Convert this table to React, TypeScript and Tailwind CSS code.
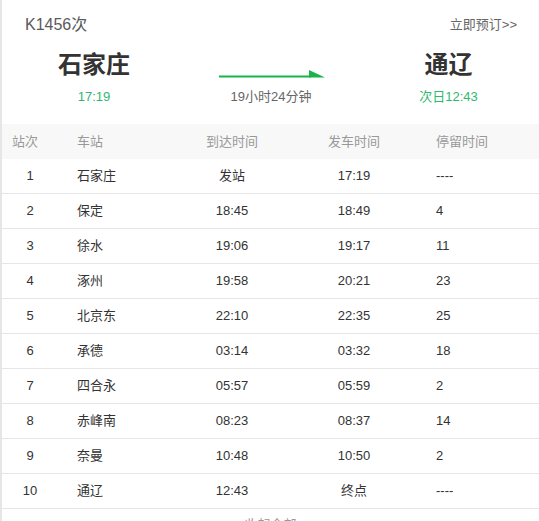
import React from "react";

const rows = [
  ["1", "石家庄", "发站", "17:19", "----"],
  ["2", "保定", "18:45", "18:49", "4"],
  ["3", "徐水", "19:06", "19:17", "11"],
  ["4", "涿州", "19:58", "20:21", "23"],
  ["5", "北京东", "22:10", "22:35", "25"],
  ["6", "承德", "03:14", "03:32", "18"],
  ["7", "四合永", "05:57", "05:59", "2"],
  ["8", "赤峰南", "08:23", "08:37", "14"],
  ["9", "奈曼", "10:48", "10:50", "2"],
  ["10", "通辽", "12:43", "终点", "----"],
];

const grid = "grid grid-cols-[56px_112px_124px_120px_1fr]";

export default function App() {
  return (
    <div
      className="w-[539px] h-[521px] overflow-hidden bg-white border-l-2 border-[#e6e6e6]"
      style={{ fontFamily: '"Liberation Sans", Arial, "Noto Sans CJK SC", sans-serif' }}
    >
      <div className="h-[124px] pt-[13px]">
        <div className="flex justify-between items-center h-6 pl-[23px] pr-[22px]">
          <span className="text-[16px] text-[#5a5a5a]">K1456次</span>
          <span className="text-[13px] text-[#666]">立即预订&gt;&gt;</span>
        </div>
        <div className="grid grid-cols-[184px_170px_1fr] mt-[12px]">
          <div className="flex flex-col items-center">
            <div className="text-[24px] leading-[32px] font-bold text-[#333]">石家庄</div>
            <div className="text-[13px] leading-[18px] mt-[7px] text-[#2fb86e]">17:19</div>
          </div>
          <div className="flex flex-col items-center pt-[21px]">
            <svg width="108" height="8" viewBox="0 0 108 8" className="block ml-[3px]">
              <rect x="0" y="5.5" width="92" height="2" fill="#19b34a" />
              <polygon points="90,0 106,7.5 90,7.5" fill="#19b34a" />
            </svg>
            <div className="text-[13px] leading-[18px] mt-[10px] text-[#666]">19小时24分钟</div>
          </div>
          <div className="flex flex-col items-center pl-[2px]">
            <div className="text-[24px] leading-[32px] font-bold text-[#333]">通辽</div>
            <div className="text-[13px] leading-[18px] mt-[7px] text-[#2fb86e]">次日12:43</div>
          </div>
        </div>
      </div>
      <div className={`${grid} h-[35px] items-center bg-[#f8f8f8] text-[13px] text-[#999]`}>
        <div className="pl-[10px]">站次</div>
        <div className="pl-[19px]">车站</div>
        <div className="text-center">到达时间</div>
        <div className="text-center">发车时间</div>
        <div className="pl-[22px]">停留时间</div>
      </div>
      {rows.map((r) => (
        <div
          key={r[0]}
          className={`${grid} h-[35px] items-center border-b border-[#e6e6e6] text-[13px] text-[#333]`}
        >
          <div className="text-center">{r[0]}</div>
          <div className="pl-[19px]">{r[1]}</div>
          <div className="text-center">{r[2]}</div>
          <div className="text-center">{r[3]}</div>
          <div className="pl-[22px]">{r[4]}</div>
        </div>
      ))}
      <div className="text-center text-[13px] text-[#999] pt-[6px]">收起全部</div>
    </div>
  );
}
